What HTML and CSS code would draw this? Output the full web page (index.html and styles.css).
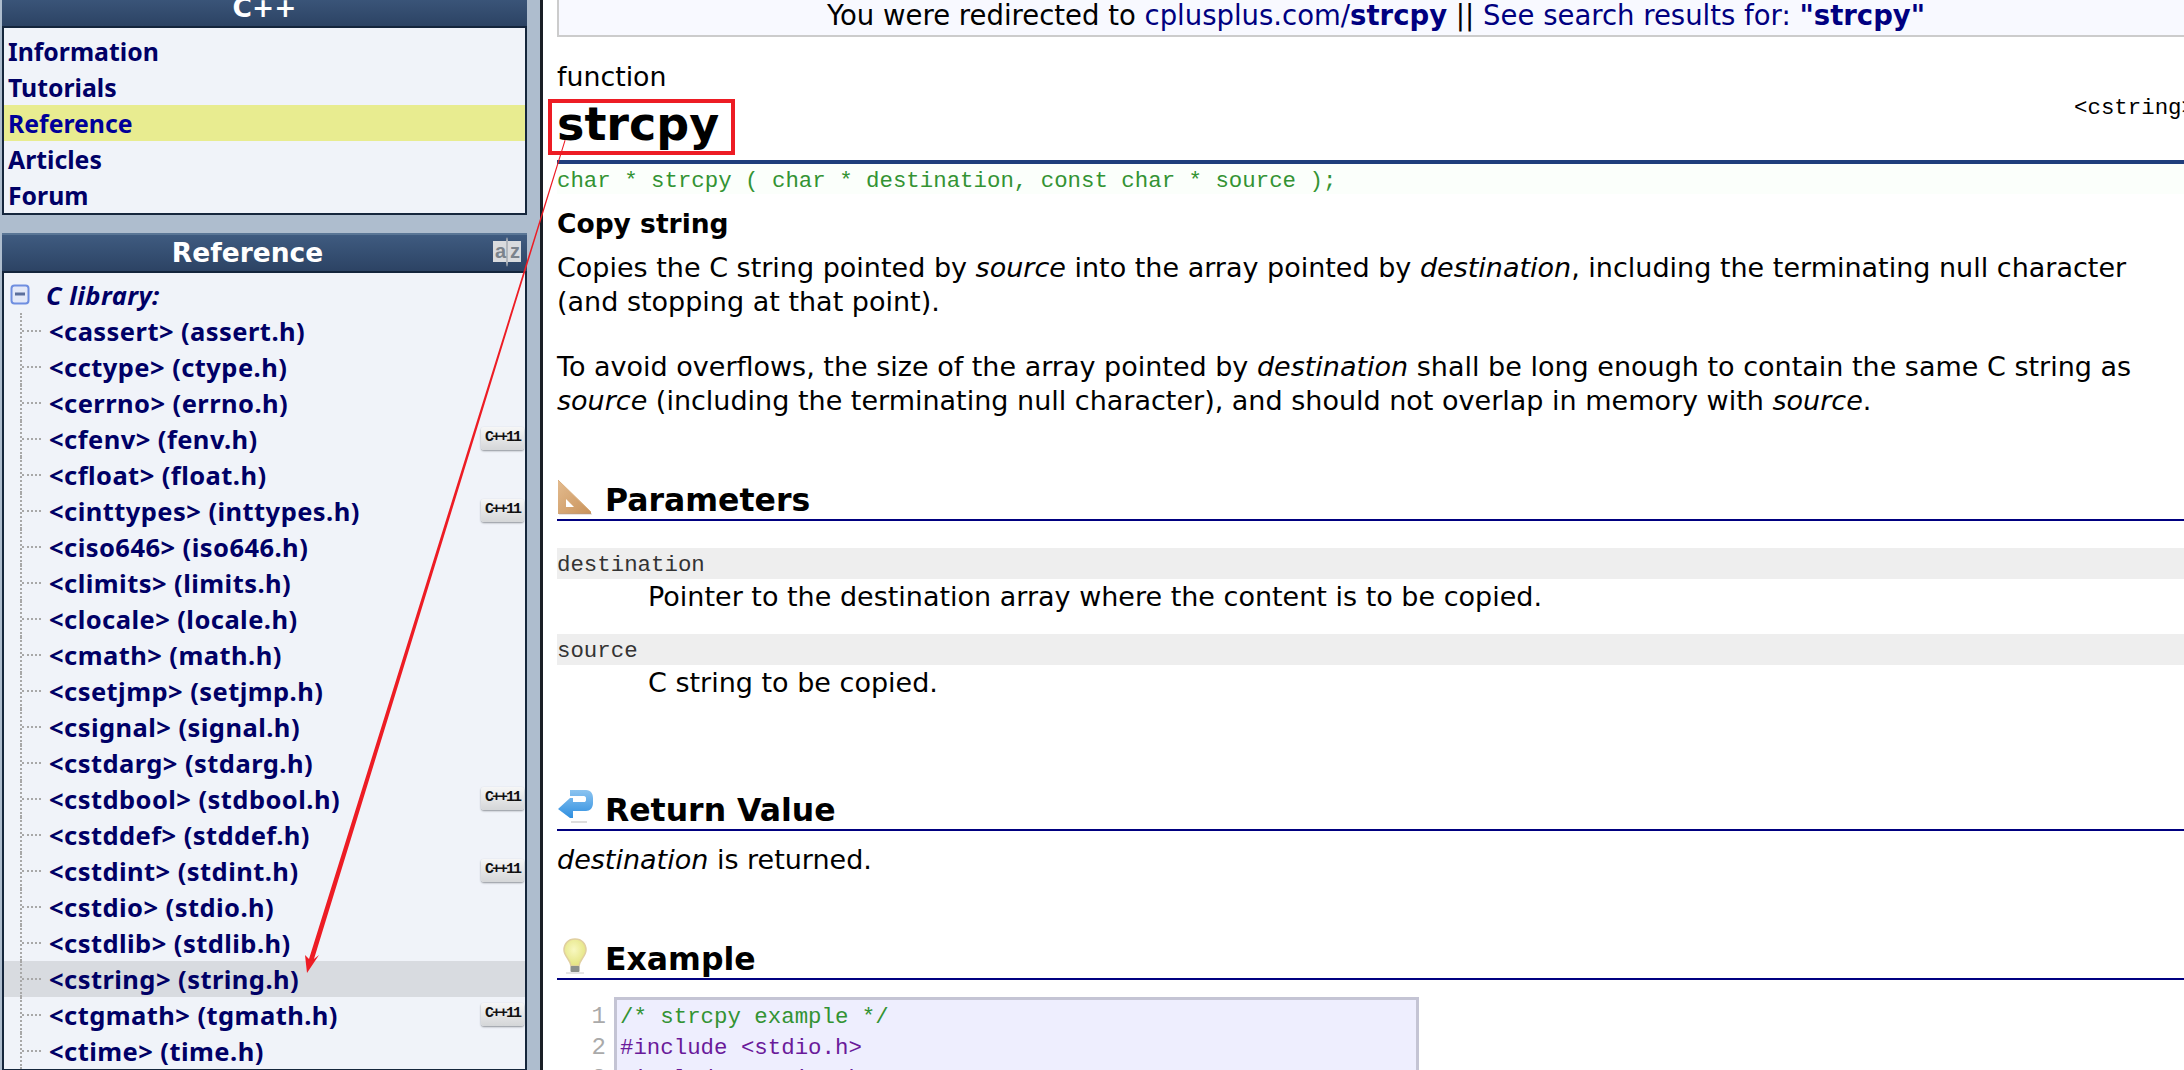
FILE: index.html
```html
<!DOCTYPE html>
<html lang="en">
<head>
<meta charset="utf-8">
<title>strcpy - C++ Reference</title>
<link rel="stylesheet" href="styles.css">
</head>
<body>
<div class="page">
  <aside class="sidebar">
    <section class="panel panel-top">
      <h2 class="panel-title">C++</h2>
      <ul class="nav">
        <li>Information</li>
        <li>Tutorials</li>
        <li class="active">Reference</li>
        <li>Articles</li>
        <li>Forum</li>
      </ul>
    </section>
    <section class="panel">
      <h2 class="panel-title panel-title-ref">Reference
        <svg class="az" viewBox="0 0 30 30" width="30" height="30"><path d="M1 4h13l1-4 1 4h13v21H16l-1 5-1-5H1z" fill="#d9dbde"/><path d="M15 1v28" stroke="#8a929c" stroke-width="1"/><text x="3" y="21" class="az-t">a</text><text x="18" y="21" class="az-t">z</text></svg>
      </h2>
      <div class="tree">
        <div class="tree-head">
          <svg class="minus" viewBox="0 0 20 22" width="20" height="22"><rect x="1.5" y="1.5" width="17" height="18" rx="3" fill="#e4e9f8" stroke="#6f8ee0" stroke-width="2"/><rect x="5" y="8.5" width="10" height="3" fill="#5c6f9c"/></svg>
          <span>C library:</span>
        </div>
        <ul class="items">
          <li>&lt;cassert&gt; (assert.h)</li>
          <li>&lt;cctype&gt; (ctype.h)</li>
          <li>&lt;cerrno&gt; (errno.h)</li>
          <li>&lt;cfenv&gt; (fenv.h)<span class="badge">C++11</span></li>
          <li>&lt;cfloat&gt; (float.h)</li>
          <li>&lt;cinttypes&gt; (inttypes.h)<span class="badge">C++11</span></li>
          <li>&lt;ciso646&gt; (iso646.h)</li>
          <li>&lt;climits&gt; (limits.h)</li>
          <li>&lt;clocale&gt; (locale.h)</li>
          <li>&lt;cmath&gt; (math.h)</li>
          <li>&lt;csetjmp&gt; (setjmp.h)</li>
          <li>&lt;csignal&gt; (signal.h)</li>
          <li>&lt;cstdarg&gt; (stdarg.h)</li>
          <li>&lt;cstdbool&gt; (stdbool.h)<span class="badge">C++11</span></li>
          <li>&lt;cstddef&gt; (stddef.h)</li>
          <li>&lt;cstdint&gt; (stdint.h)<span class="badge">C++11</span></li>
          <li>&lt;cstdio&gt; (stdio.h)</li>
          <li>&lt;cstdlib&gt; (stdlib.h)</li>
          <li class="current">&lt;cstring&gt; (string.h)</li>
          <li>&lt;ctgmath&gt; (tgmath.h)<span class="badge">C++11</span></li>
          <li>&lt;ctime&gt; (time.h)</li>
        </ul>
      </div>
    </section>
  </aside>

  <main class="content">
    <div class="notice">You were redirected to <a>cplusplus.com/<b>strcpy</b></a> || <a>See search results for: <b>"strcpy"</b></a></div>

    <div class="kind">function</div>
    <div class="title-row">
      <h1>strcpy</h1>
      <span class="header-name">&lt;cstring&gt;</span>
    </div>
    <div class="proto">char * strcpy ( char * destination, const char * source );</div>
    <div class="summary">Copy string</div>
    <p class="para">Copies the C string pointed by <i>source</i> into the array pointed by <i>destination</i>, including the terminating null character<br>(and stopping at that point).</p>
    <p class="para para-2">To avoid overflows, the size of the array pointed by <i>destination</i> shall be long enough to contain the same C string as<br><i>source</i> (including the terminating null character), and should not overlap in memory with <i>source</i>.</p>

    <h3 class="sec sec-params">
      <svg viewBox="0 0 36 36" width="36" height="36"><defs><linearGradient id="w" x1="0" y1="0" x2="1" y2="1"><stop offset="0" stop-color="#e3bb8e"/><stop offset="1" stop-color="#c9935c"/></linearGradient></defs><path fill-rule="evenodd" d="M1 1l33 32v2H1zM9 20v8h8z" fill="url(#w)"/><path d="M1 1l33 32" stroke="#d9ad7c" fill="none"/><path d="M2 35h33" stroke="#a99" stroke-opacity=".5"/></svg>
      Parameters
    </h3>
    <dl class="params">
      <dt>destination</dt>
      <dd>Pointer to the destination array where the content is to be copied.</dd>
      <dt>source</dt>
      <dd>C string to be copied.</dd>
    </dl>

    <h3 class="sec sec-return">
      <svg viewBox="0 0 36 36" width="36" height="36"><defs><linearGradient id="b" x1="0" y1="0" x2="0" y2="1"><stop offset="0" stop-color="#8cc4f0"/><stop offset="1" stop-color="#2f8fe0"/></linearGradient></defs><path d="M13 1h16c5 0 7 4 7 8v5c0 5-3 8-7 8H16v7h-3L1 20 13 9h3v4h11c1 0 2-.5 2-2V9c0-1-1-2-2-2H13z" fill="url(#b)"/><path d="M14 33h16" stroke="#bbb" stroke-opacity=".5" stroke-width="2"/></svg>
      Return Value
    </h3>
    <p class="ret"><i>destination</i> is returned.</p>

    <h3 class="sec sec-example">
      <svg viewBox="0 0 36 36" width="36" height="36"><defs><radialGradient id="y" cx=".45" cy=".4" r=".6"><stop offset="0" stop-color="#f8f8c0"/><stop offset="1" stop-color="#e4e480"/></radialGradient></defs><path d="M18 1c7 0 11 5 11 11 0 6-6 9-7 16h-8c-1-7-7-10-7-16C7 6 11 1 18 1z" fill="url(#y)" stroke="#e0cfa0" stroke-width="1.5"/><rect x="13.5" y="28" width="9" height="6" rx="1" fill="#8a8f8a"/><path d="M9 35h18" stroke="#ccc"/></svg>
      Example
    </h3>
    <div class="example">
      <ol class="gutter"><li>1</li><li>2</li><li>3</li></ol>
      <pre class="code"><span class="c">/* strcpy example */</span>
<span class="p">#include &lt;stdio.h&gt;</span>
<span class="p">#include &lt;string.h&gt;</span></pre>
    </div>
  </main>
</div>

<svg class="annotation" viewBox="0 0 2184 1070" width="2184" height="1070">
  <rect x="550" y="101" width="183" height="52" fill="none" stroke="#ed1c24" stroke-width="4"/>
  <path d="M564.6 140L565.6 140.3 314 959 319 955 307 973 305 955 309 959z" fill="#ed1c24"/>
</svg>
</body>
</html>
```
FILE: styles.css
```css
html, body { margin: 0; padding: 0; height: 1070px; overflow: hidden; background: #fff; }
ul, ol, dl, dd, p, h1, h2, h3 { margin: 0; padding: 0; list-style: none; }
.page { display: flex; width: 2240px; height: 1070px; }

/* Sidebar */
.sidebar { flex: none; width: 525px; height: 1082px; margin-top: -12px; padding: 0 13px 0 2px; background: #aebdce; border-right: 3px solid #1a1f26; overflow: hidden; font-family: "Noto Sans", sans-serif; font-weight: 700; }
.panel { border: 2px solid #15263c; border-top: 0; background: #f0f3f9; margin-bottom: 18px; }
.panel-title { height: 36px; line-height: 36px; font-family: "DejaVu Sans", sans-serif; font-size: 26.5px; font-weight: 700; color: #fff; text-align: center; background: linear-gradient(#3f5b80, #2c4364); border-bottom: 2px solid #14253c; border-top: 2px solid #5a7696; margin: 0 -2px; position: relative; }
.panel-title-ref { padding-right: 34px; }
.az { position: absolute; right: 5px; top: 2px; }
.az-t { font: 700 20px "Liberation Sans", sans-serif; fill: #7b838c; }
.nav { padding: 5px 0 0; }
.nav li { height: 36px; line-height: 36px; padding-left: 4px; font-size: 24.8px; color: #000066; }
.nav li.active { background: #e8ec90; color: #000099; }

.tree { color: #000066; font-size: 25.5px; letter-spacing: .45px; }
.tree-head { height: 36px; display: flex; align-items: center; gap: 16px; padding-left: 6px; font-style: italic; margin-top: 4px; }
.items li { height: 36px; line-height: 36px; padding-left: 45px; position: relative; }
.items li::before { content: ""; position: absolute; left: 16px; top: 0; height: 36px; border-left: 2px dotted #a8a8a8; }
.items li::after { content: ""; position: absolute; left: 18px; top: 17px; width: 19px; border-top: 2px dotted #a8a8a8; }
.items li.current { background: #d8dbe0; }
.badge { position: absolute; right: 1px; top: 6px; width: 43px; height: 23px; text-align: center; font: 700 15px/21px "Liberation Mono", monospace; letter-spacing: -2px; color: #111; background: linear-gradient(#f6f6f6, #d4d6d8); border-radius: 3px; box-shadow: 0 1px 2px #8e9298; }

/* Main */
.content { flex: none; width: 1638px; margin-left: 14px; font-family: "DejaVu Sans", Verdana, sans-serif; font-size: 27px; color: #000; position: relative; }
.notice { height: 35px; margin-top: -6px; padding-top: 6px; text-align: center; font-size: 27.5px; line-height: 30px; background: #f8f9ff; border: 2px solid #ccc; border-top: 0; }
.notice a { color: #000080; }
.kind { margin-top: 26px; line-height: 28px; font-size: 26.8px; }
.title-row { display: flex; justify-content: space-between; align-items: flex-start; height: 66px; padding-bottom: 3px; border-bottom: 4px solid #1f3e7c; }
.title-row h1 { font-size: 46px; font-weight: 700; line-height: 56px; margin-top: 5px; }
.header-name { font: 22.4px/26px "Liberation Mono", monospace; margin-top: 4px; }
.proto { font: 22.4px/25px "Liberation Mono", monospace; padding-top: 5px; color: #339333; background: #fbfffb; }
.summary { font-size: 26.5px; font-weight: 700; margin-top: 13px; line-height: 34px; }
.para { line-height: 34px; margin-top: 10px; }
.para-2 { margin-top: 31px; }
.sec { font-size: 31.5px; font-weight: 700; border-bottom: 2px solid #000080; height: 42px; display: flex; align-items: flex-end; gap: 12px; line-height: 38px; }
.sec svg { margin-bottom: 4px; }
.sec-params { margin-top: 59px; }
.params { margin-top: 27px; }
.params dt { font: 22.4px/28px "Liberation Mono", monospace; padding-top: 3px; background: #eee; color: #333; }
.params dd { padding: 2px 0 0 91px; line-height: 32px; margin-bottom: 21px; }
.sec-return { margin-top: 88px; }
.ret { line-height: 34px; margin-top: 12px; }
.sec-example { margin-top: 59px; }
.example { display: flex; margin-top: 17px; font: 22.4px/31px "Liberation Mono", monospace; }
.gutter { width: 49px; text-align: right; padding-top: 4px; color: #aaa; font-size: 24px; margin-right: 8px; }
.code { margin: 0; width: 805px; height: 120px; box-sizing: border-box; padding: 2px 0 0 3px; border: 3px solid #c4c4d4; background: #eeeefe; font: inherit; }
.code .c { color: #339333; }
.code .p { color: #6a1a9a; }

/* Screenshot annotation */
.annotation { position: absolute; left: 0; top: 0; pointer-events: none; }
```
